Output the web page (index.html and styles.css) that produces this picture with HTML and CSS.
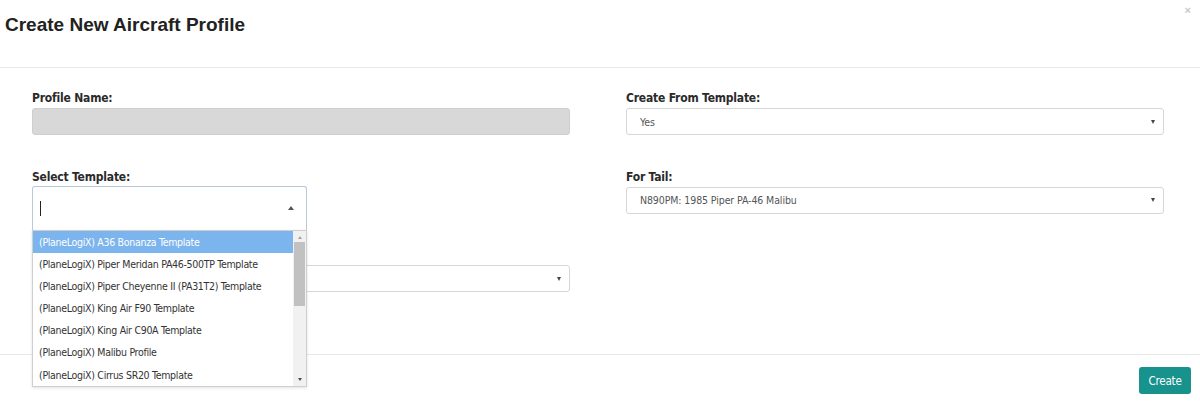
FILE: index.html
```html
<!DOCTYPE html>
<html>
<head>
<meta charset="utf-8">
<link rel="stylesheet" href="styles.css">
</head>
<body>
<div class="modal">
  <div class="modal-header">
    <h1 class="title">Create New Aircraft Profile</h1>
    <span class="close">×</span>
  </div>
  <div class="modal-body">
    <div class="field">
      <label class="label">Profile Name:</label>
      <div class="input disabled"></div>
    </div>
    <div class="field">
      <label class="label">Create From Template:</label>
      <div class="select"><span>Yes</span><i class="arrow"></i></div>
    </div>
    <div class="field">
      <label class="label">Select Template:</label>
      <div class="combo">
        <div class="select short"></div>
        <div class="combo-open">
          <div class="combo-search"><span class="cursor"></span><i class="arrow up"></i></div>
          <div class="combo-list">
            <ul class="options">
              <li class="active">(PlaneLogiX) A36 Bonanza Template</li>
              <li>(PlaneLogiX) Piper Meridan PA46-500TP Template</li>
              <li>(PlaneLogiX) Piper Cheyenne II (PA31T2) Template</li>
              <li>(PlaneLogiX) King Air F90 Template</li>
              <li>(PlaneLogiX) King Air C90A Template</li>
              <li>(PlaneLogiX) Malibu Profile</li>
              <li>(PlaneLogiX) Cirrus SR20 Template</li>
            </ul>
            <div class="scrollbar">
              <i class="sb-arrow up"></i>
              <div class="sb-track"><div class="sb-thumb"></div></div>
              <i class="sb-arrow down"></i>
            </div>
          </div>
        </div>
      </div>
    </div>
    <div class="field">
      <label class="label">For Tail:</label>
      <div class="select"><span>N890PM: 1985 Piper PA-46 Malibu</span><i class="arrow"></i></div>
    </div>
    <div class="field">
      <div class="label"></div>
      <div class="select"><span></span><i class="arrow"></i></div>
    </div>
  </div>
  <div class="modal-footer">
    <button class="btn">Create</button>
  </div>
</div>
</body>
</html>
```

FILE: styles.css
```css
* { box-sizing: border-box; }
html, body { margin: 0; padding: 0; background: #fff; }
body {
  width: 1200px;
  height: 401px;
  overflow: hidden;
  font-family: "DejaVu Sans Condensed", "Liberation Sans", sans-serif;
  color: #333;
}
.modal { display: flex; flex-direction: column; height: 401px; }
.modal-header {
  height: 68px;
  border-bottom: 1px solid #e8e8e8;
  display: flex;
  align-items: flex-start;
  justify-content: space-between;
  padding: 0 9px 0 5px;
}
.title {
  margin: 14px 0 0;
  font-family: "Liberation Sans", Arial, sans-serif;
  font-weight: bold;
  font-size: 19px;
  color: #222;
  line-height: 22px;
}
.close {
  margin-top: 4px;
  font-family: "Liberation Sans", Arial, sans-serif;
  font-size: 11px;
  color: #c8c8c8;
  font-weight: bold;
}
.modal-body {
  height: 286px;
  padding: 22px 36px 0 32px;
  display: grid;
  grid-template-columns: 538px 538px;
  column-gap: 56px;
  row-gap: 33.5px;
  align-content: start;
}
.field { display: flex; flex-direction: column; }
.label {
  font-weight: bold;
  font-size: 12px;
  letter-spacing: -0.2px;
  line-height: 16px;
  height: 16px;
  margin-bottom: 2px;
  color: #2a2a2a;
}
.input, .select {
  height: 27px;
  border: 1px solid #d6d6d6;
  border-radius: 3px;
  background: #fff;
}
.input.disabled { background: #d8d8d8; border-color: #cfcfcf; }
.select {
  display: flex;
  align-items: center;
  justify-content: space-between;
  padding: 0 8px 0 13px;
  font-size: 10.5px;
  letter-spacing: -0.1px;
  color: #555;
}
.arrow {
  width: 0; height: 0;
  border-left: 2.5px solid transparent;
  border-right: 2.5px solid transparent;
  border-top: 4px solid #444;
}
.arrow.up {
  border-top: 0;
  border-bottom: 4px solid #555;
  border-left-width: 3.5px;
  border-right-width: 3.5px;
}
.combo { position: relative; }
.select.short { width: 274px; }
.combo-open {
  position: absolute;
  top: -1px;
  left: 0;
  width: 275px;
  z-index: 5;
}
.combo-search {
  height: 44px;
  border: 1px solid #b9c9dc;
  border-bottom: 0;
  border-radius: 3px 3px 0 0;
  background: #fff;
  display: flex;
  align-items: center;
  justify-content: space-between;
  padding: 0 12px 0 7px;
}
.cursor { width: 1px; height: 15px; background: #222; }
.combo-list {
  position: relative;
  height: 157px;
  border: 1px solid #cfcfcf;
  background: #fff;
  box-shadow: 0 1px 3px rgba(0,0,0,0.12);
  display: flex;
}
.options {
  list-style: none;
  margin: 0;
  padding: 0;
  flex: 1;
  min-width: 0;
  font-size: 10.5px;
  letter-spacing: -0.3px;
  color: #333;
}
.options li {
  height: 22.2px;
  line-height: 22px;
  padding-left: 6px;
  white-space: nowrap;
  overflow: hidden;
}
.options li.active { background: #7cb4ee; color: #fff; }
.scrollbar {
  width: 13px;
  flex: none;
  background: #f1f1f1;
  display: flex;
  flex-direction: column;
  align-items: center;
}
.sb-arrow {
  width: 0; height: 0;
  margin: 5px 0 3px;
  border-left: 2.5px solid transparent;
  border-right: 2.5px solid transparent;
  border-bottom: 3px solid #a3a3a3;
}
.sb-arrow.down {
  margin: 3px 0 5px;
  border-bottom: 0;
  border-top: 3px solid #505050;
}
.sb-track { flex: 1; width: 100%; padding: 0 1px; }
.sb-thumb { height: 64px; background: #c1c1c1; }
.modal-footer {
  flex: 1;
  border-top: 1px solid #e8e8e8;
  display: flex;
  justify-content: flex-end;
  align-items: flex-start;
  padding: 12px 9px 0 0;
}
.btn {
  height: 27px;
  width: 52px;
  border: 0;
  border-radius: 3px;
  background: #17928d;
  color: #fff;
  font-family: "DejaVu Sans Condensed", sans-serif;
  font-size: 11.5px;
  letter-spacing: -0.2px;
  padding: 0;
}
```
